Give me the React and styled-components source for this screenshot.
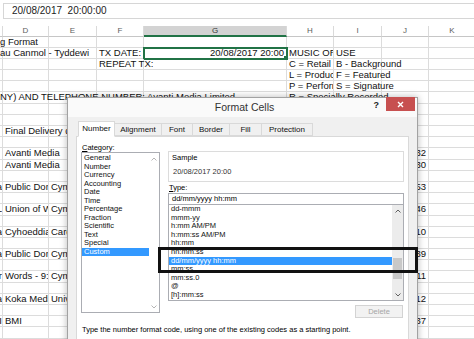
import styled, { createGlobalStyle } from 'styled-components';

const GlobalStyle = createGlobalStyle`
  html, body {
    margin: 0;
    padding: 0;
    background: #fff;
  }
  body {
    font-family: "Liberation Sans", Arial, sans-serif;
    overflow: hidden;
  }
`;

const COLS = [
  { key: 'c', width: 3 },
  { key: 'd', width: 46, label: 'D' },
  { key: 'e', width: 48, label: 'E' },
  { key: 'f', width: 47, label: 'F' },
  { key: 'g', width: 143, label: 'G', active: true },
  { key: 'h', width: 47, label: 'H' },
  { key: 'i', width: 48, label: 'I' },
  { key: 'j', width: 47, label: 'J' },
  { key: 'k', width: 47, label: 'K' },
];

const ROWS = [
  { c: { text: 'g Format', spill: true } },
  {
    c: { text: 'au Canmol - Tyddewi', spill: true },
    f: { text: 'TX DATE:' },
    g: { text: '20/08/2017 20:00', align: 'right', selected: true },
    h: { text: 'MUSIC ORIGIN' },
    i: { text: 'USE' },
  },
  { f: { text: 'REPEAT TX:', spill: true }, h: { text: 'C = Retail' }, i: { text: 'B - Background', spill: true } },
  { h: { text: 'L = Production' }, i: { text: 'F = Featured', spill: true } },
  { h: { text: 'P = Performance' }, i: { text: 'S = Signature', spill: true } },
  {
    c: { text: 'NY) AND TELEPHONE NUMBER: Avanti Media Limited', spill: true },
    h: { text: 'R = Specially Recorded', spill: true },
  },
  {},
  {},
  { d: { text: 'Final Delivery date', spill: true } },
  {},
  { d: { text: 'Avanti Media', spill: true }, j: { text: '32', align: 'right' } },
  { d: { text: 'Avanti Media', spill: true }, j: { text: '30', align: 'right' } },
  {},
  { c: { text: 'a', tail: true }, d: { text: 'Public Domain' }, e: { text: 'Cymru' }, j: { text: '53', align: 'right' } },
  {},
  { c: { text: 'L', tail: true }, d: { text: 'Union of Welsh' }, e: { text: 'Cymru' }, j: { text: '46', align: 'right' } },
  {},
  { c: { text: 'a', tail: true }, d: { text: 'Cyhoeddiadau' }, e: { text: 'Cardiff' }, j: { text: '10', align: 'right' } },
  {},
  { c: { text: 'a', tail: true }, d: { text: 'Public Domain' }, e: { text: 'Cymru' }, j: { text: '39', align: 'right' } },
  {},
  { c: { text: 'r', tail: true }, d: { text: 'Words - 9:30' }, e: { text: 'Cymru' }, j: { text: '11', align: 'right' } },
  {},
  { c: { text: 'a', tail: true }, d: { text: 'Koka Media/ UK' }, e: { text: 'Universal' }, j: { text: '12', align: 'right' } },
  {},
  { c: { text: 'I', tail: true }, d: { text: 'BMI' }, j: { text: '37', align: 'right' } },
  {},
];

const TABS = [
  { label: 'Number', width: 37, active: true },
  { label: 'Alignment', width: 48 },
  { label: 'Font', width: 32 },
  { label: 'Border', width: 38 },
  { label: 'Fill', width: 33 },
  { label: 'Protection', width: 52 },
];

const CATEGORIES = [
  'General', 'Number', 'Currency', 'Accounting', 'Date', 'Time',
  'Percentage', 'Fraction', 'Scientific', 'Text', 'Special', 'Custom',
];

const FORMATS = [
  'dd-mmm', 'mmm-yy', 'h:mm AM/PM', 'h:mm:ss AM/PM', 'hh:mm', 'hh:mm:ss',
  'dd/mm/yyyy hh:mm', 'mm:ss', 'mm:ss.0', '@', '[h]:mm:ss',
];

const Screen = styled.div`
  position: relative;
  width: 474px;
  height: 339px;
  overflow: hidden;
  background: #fff;
`;

const FormulaBar = styled.div`
  height: 26px;
  padding: 3px 0 0 3px;
  box-sizing: border-box;
`;

const FormulaInput = styled.div`
  height: 16px;
  box-sizing: border-box;
  border: 1px solid #d6d6d6;
  border-right: none;
  padding-left: 8px;
  font-size: 10px;
  line-height: 14px;
  color: #222;
  white-space: pre;
`;

const HeaderRow = styled.div`
  display: flex;
  height: 10.5px;
`;

const HeaderCell = styled.div`
  flex: 0 0 ${(p) => p.$width}px;
  min-width: 0;
  box-sizing: border-box;
  border-right: 1px solid #dadada;
  border-bottom: ${(p) => (p.$active ? '2px solid #217346' : '1px solid #c6c6c6')};
  background: ${(p) => (p.$active ? '#d3d3d3' : '#fff')};
  color: ${(p) => (p.$active ? '#333' : '#5c5c5c')};
  font-size: 8px;
  line-height: 9.5px;
  text-align: center;
  overflow: hidden;
`;

const SheetRow = styled.div`
  display: flex;
  height: 11.2px;
`;

const Cell = styled.div`
  position: relative;
  z-index: ${(p) => (p.$spill || p.$selected ? 1 : 0)};
  flex: 0 0 ${(p) => p.$width}px;
  width: ${(p) => p.$width}px;
  min-width: 0;
  box-sizing: border-box;
  border-right: 1px solid #dcdcdc;
  border-bottom: 1px solid #dcdcdc;
  padding: ${(p) => (p.$edge ? '0' : '0 2px')};
  display: flex;
  justify-content: ${(p) => (p.$align === 'right' || p.$tail ? 'flex-end' : 'flex-start')};
  overflow: ${(p) => (p.$spill ? 'visible' : 'hidden')};
  white-space: nowrap;
  font-size: 9.5px;
  line-height: 10.5px;
  color: #111;
  outline: ${(p) => (p.$selected ? '2px solid #217346' : 'none')};
  outline-offset: -1px;

  &::after {
    content: '';
    display: ${(p) => (p.$selected ? 'block' : 'none')};
    position: absolute;
    right: -3px;
    bottom: -3px;
    width: 4px;
    height: 4px;
    background: #217346;
    border: 1px solid #fff;
  }
`;

const CellText = styled.span`
  flex: none;
`;

const Dialog = styled.div`
  position: absolute;
  left: 67px;
  top: 97px;
  width: 351px;
  height: 262px;
  box-sizing: border-box;
  border: 1px solid #a2a2a2;
  background: #f0f0f0;
  box-shadow: 0 0 7px rgba(0, 0, 0, 0.28);
  display: flex;
  flex-direction: column;
  color: #000;
  z-index: 2;
`;

const TitleBar = styled.div`
  display: grid;
  grid-template-columns: 1fr auto 1fr;
  height: 19px;
  background: #fafafa;
`;

const Title = styled.div`
  grid-column: 2;
  padding-left: 4px;
  font-size: 10.5px;
  line-height: 18px;
  color: #333;
`;

const TitleControls = styled.div`
  grid-column: 3;
  justify-self: end;
  display: flex;
  align-items: flex-start;
`;

const HelpMark = styled.span`
  margin: 2px 7px 0 0;
  font-size: 9px;
  font-weight: 700;
  line-height: 10px;
  color: #222;
`;

const CloseButton = styled.div`
  width: 29px;
  height: 14px;
  margin: -1px 2px 0 0;
  background: #c75050;
  display: flex;
  align-items: center;
  justify-content: center;
`;

const Body = styled.div`
  flex: 1;
  display: flex;
  flex-direction: column;
  padding: 4px 8px 0;
`;

const TabStrip = styled.div`
  position: relative;
  z-index: 1;
  display: flex;
  align-items: flex-end;
  height: 15px;
  padding-left: 2px;
`;

const Tab = styled.div`
  flex: 0 0 ${(p) => p.$width}px;
  box-sizing: border-box;
  height: ${(p) => (p.$active ? 16 : 13)}px;
  margin-bottom: ${(p) => (p.$active ? -1 : 0)}px;
  margin-left: -1px;
  border: 1px solid #d9d9d9;
  border-bottom-color: ${(p) => (p.$active ? '#fff' : '#d9d9d9')};
  background: ${(p) => (p.$active ? '#fff' : '#f0f0f0')};
  font-size: 8px;
  line-height: ${(p) => (p.$active ? 13 : 11)}px;
  text-align: center;
  color: #111;

  &:first-child {
    margin-left: 0;
  }
`;

const Panel = styled.div`
  flex: 1;
  width: 333px;
  box-sizing: border-box;
  border: 1px solid #d9d9d9;
  background: #fff;
  padding: 6px 4px 0;
`;

const PanelRow = styled.div`
  display: flex;
  gap: 8px;
`;

const CategoryColumn = styled.div`
  flex: 0 0 79px;
  display: flex;
  flex-direction: column;
`;

const FormatColumn = styled.div`
  flex: 0 0 236px;
  display: flex;
  flex-direction: column;
`;

const FieldLabel = styled.div`
  height: 9px;
  margin-top: ${(p) => p.$gap || 0}px;
  font-size: 7.5px;
  line-height: 9px;
  padding-left: 1px;
`;

const ListBox = styled.div`
  display: flex;
  height: ${(p) => p.$height}px;
  box-sizing: border-box;
  border: 1px solid #abadb3;
  border-top-width: ${(p) => (p.$joined ? 0 : 1)}px;
  background: #fff;
`;

const Items = styled.div`
  flex: 1;
  overflow: hidden;
  padding-top: ${(p) => p.$pad || 0}px;
`;

const Item = styled.div`
  height: ${(p) => p.$h}px;
  padding-left: 2px;
  font-size: 7.5px;
  line-height: ${(p) => p.$h}px;
  white-space: nowrap;
  color: ${(p) => (p.$selected ? '#fff' : '#111')};
  background: ${(p) => (p.$selected ? '#3399ff' : 'transparent')};
`;

const ScrollBar = styled.div`
  flex: 0 0 ${(p) => p.$width}px;
  display: flex;
  flex-direction: column;
  background: ${(p) => (p.$track ? '#ececec' : '#fff')};
`;

const ScrollArrow = styled.div`
  height: 11px;
  display: flex;
  align-items: center;
  justify-content: center;
`;

const ScrollTrack = styled.div`
  flex: 1;
`;

const Thumb = styled.div`
  height: ${(p) => p.$size}px;
  margin: ${(p) => p.$offset}px 1px 0;
  background: #c8c8c8;
`;

const SampleBox = styled.div`
  margin-top: 8px;
  height: 31px;
  box-sizing: border-box;
  border: 1px solid #dcdcdc;
  padding: 1px 3px 0;
  font-size: 7.5px;
  line-height: 9px;
`;

const SampleValue = styled.div`
  margin-top: 5px;
  padding-left: 1px;
  color: #333;
`;

const TypeInput = styled.div`
  margin-top: 1px;
  height: 12px;
  box-sizing: border-box;
  border: 1px solid #abadb3;
  padding-left: 3px;
  background: #fff;
  font-size: 7.5px;
  line-height: 10px;
`;

const DeleteButton = styled.button`
  align-self: flex-end;
  width: 48px;
  height: 13px;
  margin: 4px 1px 0 0;
  padding: 0;
  border: 1px solid #d3d3d3;
  background: #f2f2f2;
  color: #a6a6a6;
  font-family: inherit;
  font-size: 7.5px;
  line-height: 11px;
`;

const Hint = styled.div`
  margin-top: 7px;
  padding-left: 1px;
  font-size: 7.5px;
  line-height: 9px;
  white-space: nowrap;
`;

const Callout = styled.div`
  position: absolute;
  left: 90px;
  top: 149px;
  width: 260px;
  height: 26px;
  box-sizing: border-box;
  border: 3px solid #111;
`;

const Chevron = ({ up, color }) => (
  <svg width="6" height="4" viewBox="0 0 6 4">
    <polyline
      points={up ? '0.5,3.5 3,1 5.5,3.5' : '0.5,0.5 3,3 5.5,0.5'}
      fill="none"
      stroke={color}
      strokeWidth="1"
    />
  </svg>
);

const Sheet = () => (
  <>
    <HeaderRow>
      {COLS.map((col) => (
        <HeaderCell key={col.key} $width={col.width} $active={col.active}>
          {col.label}
        </HeaderCell>
      ))}
    </HeaderRow>
    {ROWS.map((row, r) => (
      <SheetRow key={r}>
        {COLS.map((col) => {
          const cell = row[col.key] || {};
          return (
            <Cell
              key={col.key}
              $width={col.width}
              $edge={col.key === 'c'}
              $spill={cell.spill}
              $tail={cell.tail}
              $align={cell.align}
              $selected={cell.selected}
            >
              {cell.text && <CellText>{cell.text}</CellText>}
            </Cell>
          );
        })}
      </SheetRow>
    ))}
  </>
);

const FormatCellsDialog = () => (
  <Dialog>
    <TitleBar>
      <Title>Format Cells</Title>
      <TitleControls>
        <HelpMark>?</HelpMark>
        <CloseButton>
          <svg width="7" height="7" viewBox="0 0 7 7">
            <path d="M1 1L6 6M6 1L1 6" stroke="#fff" strokeWidth="1.4" />
          </svg>
        </CloseButton>
      </TitleControls>
    </TitleBar>
    <Body>
      <TabStrip>
        {TABS.map((tab) => (
          <Tab key={tab.label} $width={tab.width} $active={tab.active}>
            {tab.label}
          </Tab>
        ))}
      </TabStrip>
      <Panel>
        <PanelRow>
          <CategoryColumn>
            <FieldLabel>
              <u>C</u>ategory:
            </FieldLabel>
            <ListBox $height={161}>
              <Items $pad={1}>
                {CATEGORIES.map((name) => (
                  <Item key={name} $h={8.5} $selected={name === 'Custom'}>
                    {name}
                  </Item>
                ))}
              </Items>
              <ScrollBar $width={10}>
                <ScrollArrow>
                  <Chevron up color="#b5b5b5" />
                </ScrollArrow>
                <ScrollTrack />
                <ScrollArrow>
                  <Chevron color="#b5b5b5" />
                </ScrollArrow>
              </ScrollBar>
            </ListBox>
          </CategoryColumn>
          <FormatColumn>
            <SampleBox>
              Sample
              <SampleValue>20/08/2017 20:00</SampleValue>
            </SampleBox>
            <FieldLabel $gap={1}>
              <u>T</u>ype:
            </FieldLabel>
            <TypeInput>dd/mm/yyyy hh:mm</TypeInput>
            <ListBox $height={96} $joined>
              <Items>
                {FORMATS.map((fmt) => (
                  <Item key={fmt} $h={8.6} $selected={fmt === 'dd/mm/yyyy hh:mm'}>
                    {fmt}
                  </Item>
                ))}
              </Items>
              <ScrollBar $width={11} $track>
                <ScrollArrow>
                  <Chevron up color="#606060" />
                </ScrollArrow>
                <ScrollTrack>
                  <Thumb $offset={42} $size={21} />
                </ScrollTrack>
                <ScrollArrow>
                  <Chevron color="#606060" />
                </ScrollArrow>
              </ScrollBar>
            </ListBox>
            <DeleteButton disabled>Delete</DeleteButton>
          </FormatColumn>
        </PanelRow>
        <Hint>Type the number format code, using one of the existing codes as a starting point.</Hint>
      </Panel>
    </Body>
    <Callout />
  </Dialog>
);

export default function App() {
  return (
    <>
      <GlobalStyle />
      <Screen>
        <FormulaBar>
          <FormulaInput>20/08/2017  20:00:00</FormulaInput>
        </FormulaBar>
        <Sheet />
        <FormatCellsDialog />
      </Screen>
    </>
  );
}
